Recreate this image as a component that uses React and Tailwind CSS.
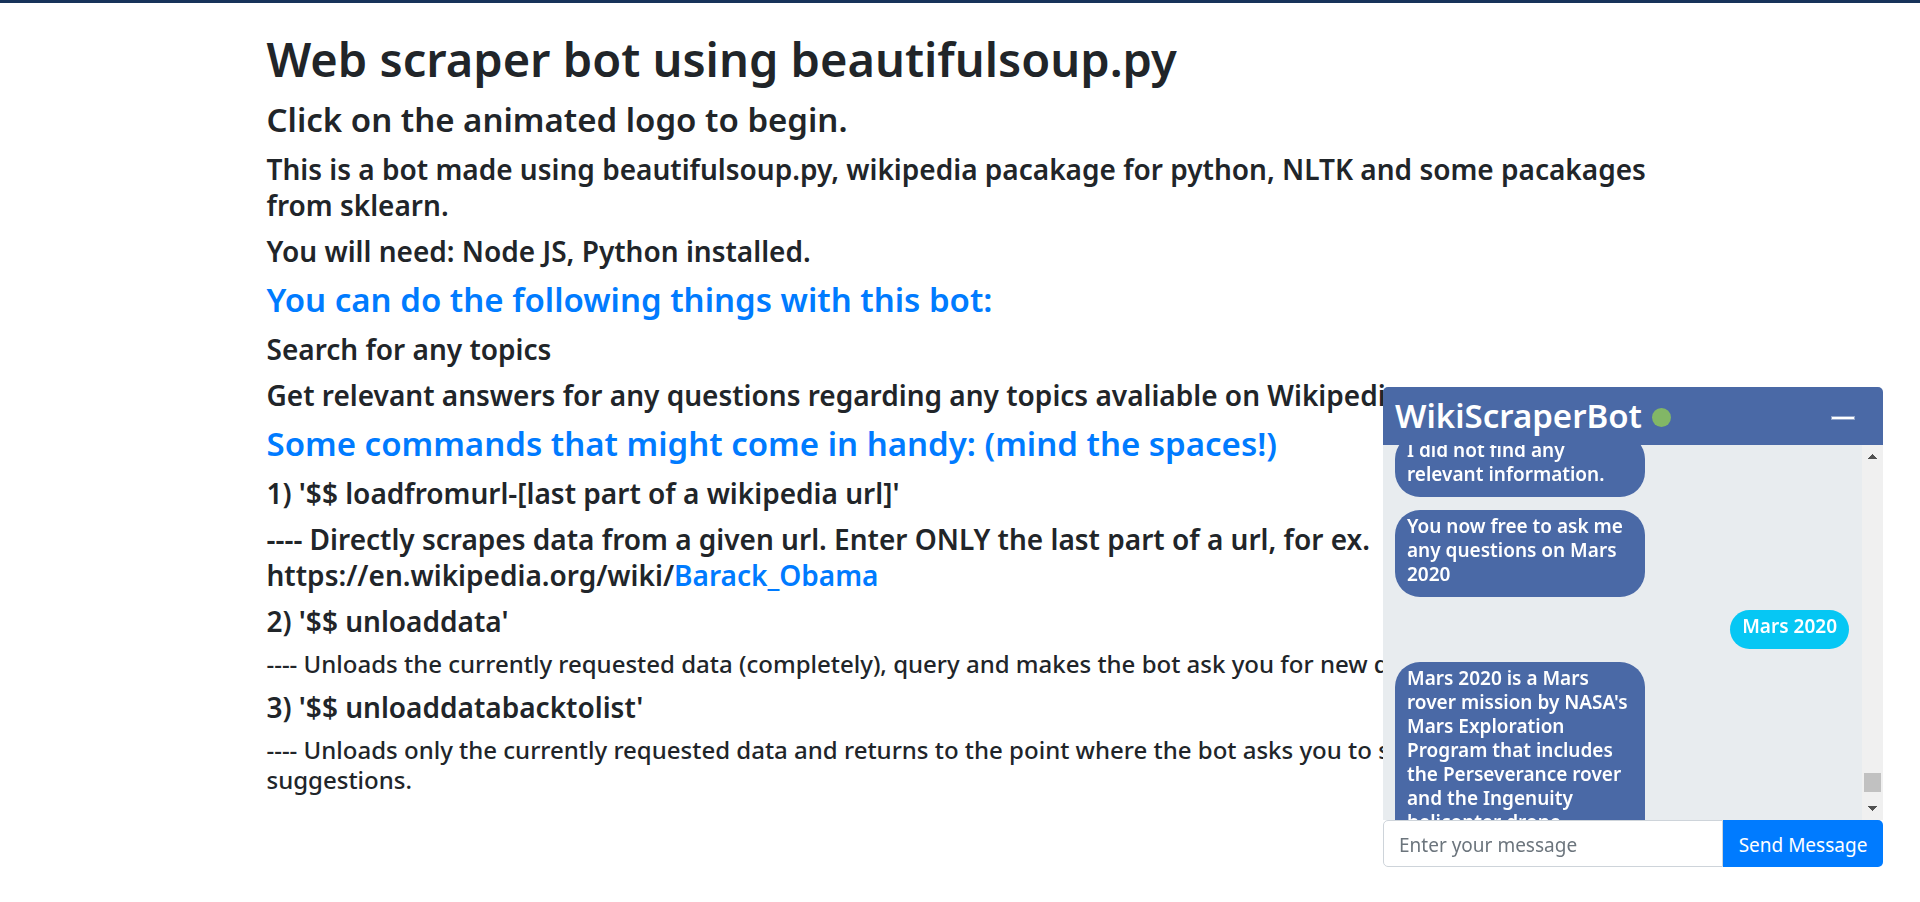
import { useLayoutEffect, useRef } from "react";

const messages = [
  { from: "bot", text: "I did not find any relevant information." },
  { from: "bot", text: "You now free to ask me any questions on Mars 2020" },
  { from: "user", text: "Mars 2020" },
  {
    from: "bot",
    text: "Mars 2020 is a Mars rover mission by NASA's Mars Exploration Program that includes the Perseverance rover and the Ingenuity helicopter drone.",
  },
];

const h3 = "text-[33px] leading-[42px] font-semibold";
const h4 = "text-[28px] leading-9 font-semibold";
const h5 = "text-2xl leading-[30px] font-medium";

function Message({ from, text }) {
  return from === "bot" ? (
    <li className="w-[250px] self-start rounded-[25px] bg-[#4a69a6] px-3 pt-1 pb-[11px]">{text}</li>
  ) : (
    <li className="self-end rounded-[20px] bg-[#06c7f4] px-3 pt-1 pb-[11px]">{text}</li>
  );
}

function ScrollBar() {
  return (
    <div aria-hidden="true" className="flex w-[21px] shrink-0 flex-col items-center justify-between bg-[#f0f0f0]">
      <svg width="21" height="21" viewBox="0 0 21 21" shapeRendering="crispEdges">
        <path d="M6 14h9L10.500 9z" fill="#505050" />
      </svg>
      <div className="flex flex-col items-center gap-[7px]">
        <div className="h-[19px] w-[17px] bg-[#c1c1c1]" />
        <svg width="21" height="21" viewBox="0 0 21 21" shapeRendering="crispEdges">
          <path d="M6 7h9L10.500 12z" fill="#505050" />
        </svg>
      </div>
    </div>
  );
}

function ChatWindow() {
  const list = useRef(null);

  useLayoutEffect(() => {
    list.current.scrollTop = 11;
  }, []);

  return (
    <section className="fixed right-[37px] bottom-[35px] w-[500px]">
      <header className="flex h-[58px] items-center rounded-t-[5px] bg-[#4a69a6] pr-7 pl-3 text-white">
        <h2 className={h3}>WikiScraperBot</h2>
        <span className="mt-0.5 ml-2.5 size-[19px] rounded-full bg-[#82b766]" />
        <button type="button" aria-label="Minimize" className="mt-1 ml-auto flex h-6 w-6 items-center">
          <span className="h-1 w-6 border border-[#92a5ca] bg-white" />
        </button>
      </header>
      <div className="flex h-[375px] bg-[#e8ecef]">
        <ul
          ref={list}
          className="flex grow flex-col gap-[13px] overflow-y-scroll pr-[13px] pl-3 text-[19px] leading-6 font-semibold text-white [scrollbar-width:none]"
        >
          {messages.map((message) => (
            <Message key={message.text} {...message} />
          ))}
        </ul>
        <ScrollBar />
      </div>
      <form className="flex h-[47px] text-[19px]" onSubmit={(event) => event.preventDefault()}>
        <input
          type="text"
          aria-label="Message"
          placeholder="Enter your message"
          className="min-w-0 grow rounded-l-[5px] border border-[#ced4da] bg-white px-[15px] pt-1 outline-none placeholder:text-[#6c757d]"
        />
        <button type="submit" className="w-40 rounded-r-[5px] bg-[#007bff] pt-1 text-white">
          Send Message
        </button>
      </form>
    </section>
  );
}

export default function App() {
  return (
    <div className="border-t-[3px] border-[#17335a] bg-white font-['Noto_Sans',sans-serif] text-[#212529]">
      <main className="mx-auto flex max-w-[1425px] flex-col gap-2.5 px-[19px] py-[26px]">
        <h1 className="text-[47px] leading-[60px] font-semibold">Web scraper bot using beautifulsoup.py</h1>
        <h3 className={h3}>Click on the animated logo to begin.</h3>
        <h4 className={h4}>
          This is a bot made using beautifulsoup.py, wikipedia pacakage for python, NLTK and some pacakages from
          sklearn.
        </h4>
        <h4 className={h4}>You will need: Node JS, Python installed.</h4>
        <h3 className={`${h3} text-[#007bff]`}>You can do the following things with this bot:</h3>
        <h4 className={h4}>Search for any topics</h4>
        <h4 className={h4}>Get relevant answers for any questions regarding any topics avaliable on Wikipedia</h4>
        <h3 className={`${h3} text-[#007bff]`}>Some commands that might come in handy: (mind the spaces!)</h3>
        <h4 className={h4}>1) '$$ loadfromurl-[last part of a wikipedia url]'</h4>
        <h4 className={h4}>
          ---- Directly scrapes data from a given url. Enter ONLY the last part of a url, for ex.
          https://en.wikipedia.org/wiki/<span className="text-[#007bff]">Barack_Obama</span>
        </h4>
        <h4 className={h4}>2) '$$ unloaddata'</h4>
        <h5 className={h5}>
          ---- Unloads the currently requested data (completely), query and makes the bot ask you for new query
        </h5>
        <h4 className={h4}>3) '$$ unloaddatabacktolist'</h4>
        <h5 className={h5}>
          ---- Unloads only the currently requested data and returns to the point where the bot asks you to select a
          topic from the suggestions.
        </h5>
      </main>
      <ChatWindow />
    </div>
  );
}
